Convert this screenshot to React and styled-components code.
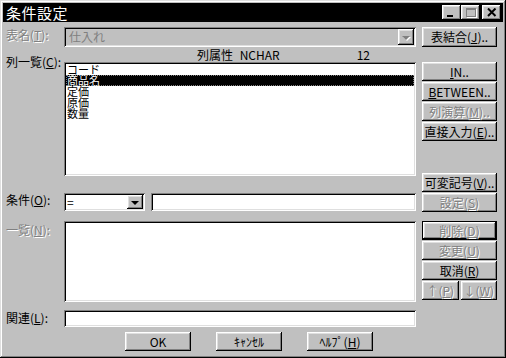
import React from 'react';
import styled, { createGlobalStyle, css } from 'styled-components';

const GlobalStyle = createGlobalStyle`
  html, body {
    margin: 0;
    padding: 0;
    background: #c0c0c0;
  }
  body {
    font-family: "Noto Sans CJK JP", "Noto Sans", sans-serif;
    font-size: 12px;
    color: #000;
  }
`;

const raised = css`
  box-shadow: inset -1px -1px #000, inset 1px 1px #fff, inset -2px -2px #808080, inset 2px 2px #dfdfdf;
`;
const sunken = css`
  box-shadow: inset 1px 1px #808080, inset -1px -1px #fff, inset 2px 2px #000, inset -2px -2px #dfdfdf;
`;
const disabledText = css`
  color: #808080;
  text-shadow: 1px 1px 0 #fff;
`;

const Window = styled.div`
  width: 506px;
  height: 358px;
  box-sizing: border-box;
  padding: 3px;
  background: #c0c0c0;
  box-shadow: inset -1px -1px #000, inset 1px 1px #dfdfdf, inset -2px -2px #808080, inset 2px 2px #fff;
  display: flex;
  flex-direction: column;
`;

const TitleBar = styled.div`
  height: 19px;
  background: #000;
  display: flex;
  align-items: center;
  padding: 0 2px 0 3px;
`;

const Title = styled.span`
  color: #fff;
  font-size: 15px;
  line-height: 19px;
  letter-spacing: 0.5px;
`;

const CaptionButtons = styled.div`
  margin-left: auto;
  display: flex;
`;

const CapButton = styled.div`
  width: 19px;
  height: 15px;
  box-sizing: border-box;
  background: #c0c0c0;
  ${raised};
  margin-left: ${({ $gap }) => ($gap ? '2px' : '0')};
  display: flex;
  align-items: center;
  justify-content: center;
`;

const MinGlyph = styled.div`
  width: 6px;
  height: 2px;
  background: #000;
  margin-top: 6px;
  margin-right: 4px;
`;

const MaxGlyph = styled.div`
  width: 10px;
  height: 9px;
  box-sizing: border-box;
  border: 1px solid #808080;
  border-top-width: 2px;
  box-shadow: 1px 1px 0 #fff;
`;

const Body = styled.div`
  flex: 1;
  display: flex;
  flex-direction: column;
  padding: 5px 6px 0 3px;
`;

const TopArea = styled.div`
  display: flex;
`;

const LeftColumn = styled.div`
  width: 410px;
  display: flex;
  flex-direction: column;
`;

const RightColumn = styled.div`
  width: 75px;
  margin-left: 6px;
  display: flex;
  flex-direction: column;
  gap: 1px;
`;

const FieldRow = styled.div`
  display: grid;
  grid-template-columns: 58px 352px;
  height: ${({ $h }) => $h}px;
  margin-top: ${({ $mt }) => $mt || 0}px;
`;

const Label = styled.div`
  font-size: 12px;
  line-height: 12px;
  white-space: nowrap;
  margin-top: ${({ $offset }) => $offset || 0}px;
  ${({ $disabled }) => $disabled && disabledText};
`;

const ComboBox = styled.div`
  height: 100%;
  box-sizing: border-box;
  background: ${({ $disabled }) => ($disabled ? '#c0c0c0' : '#fff')};
  ${sunken};
  display: flex;
  align-items: center;
  padding: 2px;
  width: ${({ $w }) => ($w ? `${$w}px` : 'auto')};
`;

const ComboText = styled.span`
  flex: 1;
  padding-left: ${({ $pad }) => $pad || 2}px;
  line-height: 12px;
  white-space: nowrap;
  color: ${({ $disabled }) => ($disabled ? '#808080' : '#000')};
`;

const DropButton = styled.div`
  width: 16px;
  height: 100%;
  box-sizing: border-box;
  background: #c0c0c0;
  ${raised};
  display: flex;
  align-items: center;
  justify-content: center;
`;

const Arrow = styled.div`
  width: 0;
  height: 0;
  border-left: 4px solid transparent;
  border-right: 4px solid transparent;
  border-top: 4px solid ${({ $disabled }) => ($disabled ? '#808080' : '#000')};
  filter: ${({ $disabled }) => ($disabled ? 'drop-shadow(1px 1px 0 #fff)' : 'none')};
  margin-top: 1px;
`;

const HeaderText = styled.div`
  display: flex;
  align-items: center;
  padding-left: 133px;
  padding-right: 46px;
  line-height: 12px;
`;

const HeaderName = styled.span`
  white-space: nowrap;
  word-spacing: 4px;
`;

const HeaderSize = styled.span`
  margin-left: auto;
`;

const ListBox = styled.div`
  height: 100%;
  box-sizing: border-box;
  background: #fff;
  ${sunken};
  padding: 2px;
  overflow: hidden;
`;

const ListItem = styled.div`
  height: 11px;
  font-size: 11px;
  line-height: 11px;
  padding-left: 1px;
  white-space: nowrap;
  ${({ $selected }) =>
    $selected &&
    css`
      background: #000;
      color: #fff;
      outline: 1px dotted #808080;
      outline-offset: -1px;
    `}
`;

const TextField = styled.div`
  height: 100%;
  box-sizing: border-box;
  background: #fff;
  ${sunken};
  flex: 1;
`;

const ConditionFields = styled.div`
  display: flex;
  gap: 6px;
  height: 100%;
`;

const Button = styled.div`
  height: ${({ $h }) => $h || 19}px;
  width: ${({ $w }) => ($w ? `${$w}px` : 'auto')};
  flex: ${({ $grow }) => ($grow ? 1 : 'none')};
  box-sizing: border-box;
  background: #c0c0c0;
  ${raised};
  ${({ $default }) =>
    $default &&
    css`
      box-shadow: inset 0 0 0 1px #000, inset -2px -2px #000, inset 2px 2px #fff, inset -3px -3px #808080,
        inset 3px 3px #dfdfdf;
    `}
  margin-top: ${({ $mt }) => $mt || 0}px;
  display: flex;
  align-items: center;
  justify-content: center;
  line-height: 12px;
  white-space: nowrap;
  ${({ $disabled }) => $disabled && disabledText};
  u {
    text-decoration-thickness: 1px;
    text-underline-offset: 1px;
  }
`;

const ArrowButtons = styled.div`
  display: flex;
  gap: 2px;
`;

const Footer = styled.div`
  display: flex;
  justify-content: center;
  gap: 25px;
  margin-top: 5px;
  padding-right: 5px;
`;

const columns = ['コード', '商品名', '定価', '原価', '数量'];

const App = () => (
  <>
    <GlobalStyle />
    <Window>
      <TitleBar>
        <Title>条件設定</Title>
        <CaptionButtons>
          <CapButton>
            <MinGlyph />
          </CapButton>
          <CapButton>
            <MaxGlyph />
          </CapButton>
          <CapButton $gap>
            <svg width="10" height="9" viewBox="0 0 10 9">
              <path d="M1 0.5 L8.5 8 M8.5 0.5 L1 8" stroke="#000" strokeWidth="2" />
            </svg>
          </CapButton>
        </CaptionButtons>
      </TitleBar>
      <Body>
        <TopArea>
          <LeftColumn>
            <FieldRow $h={20}>
              <Label $offset={2} $disabled>
                表名(<u>T</u>):
              </Label>
              <ComboBox $disabled>
                <ComboText $disabled $pad={3}>仕入れ</ComboText>
                <DropButton>
                  <Arrow $disabled />
                </DropButton>
              </ComboBox>
            </FieldRow>
            <FieldRow $h={15}>
              <span />
              <HeaderText>
                <HeaderName>列属性 NCHAR</HeaderName>
                <HeaderSize>12</HeaderSize>
              </HeaderText>
            </FieldRow>
            <FieldRow $h={114}>
              <Label $offset={-6}>
                列一覧(<u>C</u>):
              </Label>
              <ListBox>
                {columns.map((name) => (
                  <ListItem key={name} $selected={name === '商品名'}>
                    {name}
                  </ListItem>
                ))}
              </ListBox>
            </FieldRow>
            <FieldRow $h={18} $mt={17}>
              <Label $offset={1}>
                条件(<u>O</u>):
              </Label>
              <ConditionFields>
                <ComboBox $w={81}>
                  <ComboText $pad={1}>=</ComboText>
                  <DropButton>
                    <Arrow />
                  </DropButton>
                </ComboBox>
                <TextField />
              </ConditionFields>
            </FieldRow>
            <FieldRow $h={81} $mt={10}>
              <Label $offset={3} $disabled>
                一覧(<u>N</u>):
              </Label>
              <ListBox />
            </FieldRow>
            <FieldRow $h={17} $mt={8}>
              <Label $offset={2}>
                関連(<u>L</u>):
              </Label>
              <TextField />
            </FieldRow>
          </LeftColumn>
          <RightColumn>
            <Button $h={20}>
              表結合(<u>J</u>)..
            </Button>
            <Button $mt={14}>
              <span>
                <u>I</u>N..
              </span>
            </Button>
            <Button>
              <span>
                <u>B</u>ETWEEN..
              </span>
            </Button>
            <Button $disabled>
              列演算(<u>M</u>)..
            </Button>
            <Button>
              直接入力(<u>E</u>)..
            </Button>
            <Button $mt={31}>
              可変記号(<u>V</u>)..
            </Button>
            <Button $disabled>
              設定(<u>S</u>)
            </Button>
            <Button $mt={8} $default $disabled>
              削除(<u>D</u>)
            </Button>
            <Button $disabled>
              変更(<u>U</u>)
            </Button>
            <Button>
              取消(<u>R</u>)
            </Button>
            <ArrowButtons>
              <Button $grow $disabled>
                ↑(<u>P</u>)
              </Button>
              <Button $grow $disabled>
                ↓(<u>W</u>)
              </Button>
            </ArrowButtons>
          </RightColumn>
        </TopArea>
        <Footer>
          <Button $w={66}>OK</Button>
          <Button $w={66}>ｷｬﾝｾﾙ</Button>
          <Button $w={66}>
            ﾍﾙﾌﾟ(<u>H</u>)
          </Button>
        </Footer>
      </Body>
    </Window>
  </>
);

export default App;
